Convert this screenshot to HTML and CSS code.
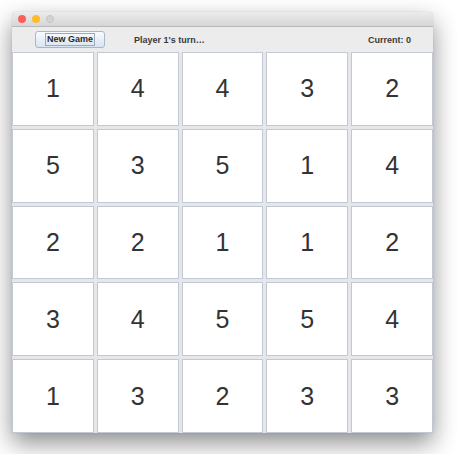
FILE: index.html
```html
<!DOCTYPE html>
<html>
<head>
<meta charset="utf-8">
<link rel="stylesheet" href="styles.css">
</head>
<body>
<div class="window">
  <div class="titlebar">
    <span class="light red"></span>
    <span class="light yellow"></span>
    <span class="light gray"></span>
  </div>
  <div class="toolbar">
    <button class="btn"><span class="btn-label">New Game</span></button>
    <span class="status">Player 1's turn…</span>
    <span class="current">Current: 0</span>
  </div>
  <div class="grid">
    <div class="cell">1</div><div class="cell">4</div><div class="cell">4</div><div class="cell">3</div><div class="cell">2</div>
    <div class="cell">5</div><div class="cell">3</div><div class="cell">5</div><div class="cell">1</div><div class="cell">4</div>
    <div class="cell">2</div><div class="cell">2</div><div class="cell">1</div><div class="cell">1</div><div class="cell">2</div>
    <div class="cell">3</div><div class="cell">4</div><div class="cell">5</div><div class="cell">5</div><div class="cell">4</div>
    <div class="cell">1</div><div class="cell">3</div><div class="cell">2</div><div class="cell">3</div><div class="cell">3</div>
  </div>
</div>
</body>
</html>
```
FILE: styles.css
```css
html, body {
  margin: 0;
  padding: 0;
  background: #ffffff;
}
body {
  box-sizing: border-box;
  min-height: 454px;
  padding: 12px 0 0 12px;
  font-family: "Liberation Sans", Arial, sans-serif;
}
.window {
  width: 421px;
  height: 421px;
  display: flex;
  flex-direction: column;
  background: #ececec;
  border-radius: 4px 4px 0 0;
  box-shadow: 0 10px 24px rgba(0,0,0,0.45), 0 0 1px rgba(0,0,0,0.3);
  overflow: hidden;
}
.titlebar {
  height: 14px;
  flex: none;
  display: flex;
  align-items: center;
  gap: 6px;
  padding-left: 6px;
  background: linear-gradient(#ececec, #d6d6d6);
  border-bottom: 1px solid #b8b8b8;
}
.light {
  width: 8px;
  height: 8px;
  border-radius: 50%;
  display: block;
}
.red { background: #fc5f57; }
.yellow { background: #fdbc2e; }
.gray { background: #d3d3d3; border: 0.5px solid #c4c4c4; box-sizing: border-box; }
.toolbar {
  height: 25px;
  flex: none;
  display: flex;
  align-items: center;
  padding: 0 22px 0 23px;
  background: #ececec;
  font-size: 9px;
  font-weight: bold;
  color: #3a3a3a;
}
.btn {
  width: 70px;
  height: 17px;
  margin: 0;
  padding: 0;
  display: flex;
  align-items: center;
  justify-content: center;
  background: linear-gradient(#f8fbff, #d9e4f1);
  border: 1px solid #a8b8cc;
  border-radius: 3px;
  font-family: inherit;
  font-size: 9px;
  font-weight: bold;
  color: #2a2a2a;
}
.btn-label {
  outline: 1px solid #a0a8b3;
  padding: 0 1px;
  line-height: 11px;
}
.status {
  margin-left: 29px;
}
.current {
  margin-left: auto;
}
.grid {
  flex: 1;
  display: grid;
  grid-template-columns: repeat(5, 1fr);
  grid-template-rows: repeat(5, 1fr);
  gap: 3px;
  background: #e6e7ea;
}
.cell {
  background: #ffffff;
  border: 1px solid #c3c9d2;
  display: flex;
  align-items: center;
  justify-content: center;
  font-size: 25px;
  color: #333333;
}
```
